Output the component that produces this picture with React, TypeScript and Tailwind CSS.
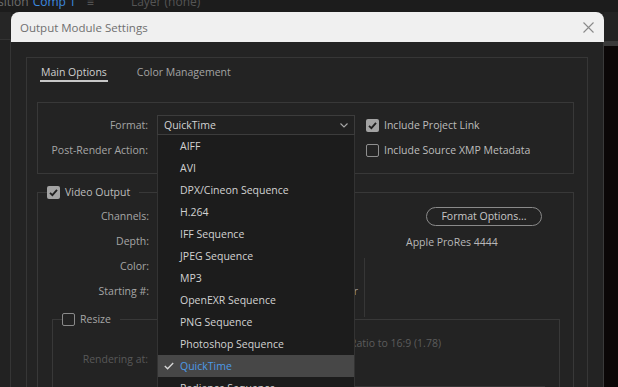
import React from "react";

const Check = ({ checked, dim }: { checked?: boolean; dim?: boolean }) =>
  checked ? (
    <span className="inline-flex h-[13px] w-[13px] shrink-0 items-center justify-center rounded-[2px] bg-[#a3a3a3]">
      <svg width="11" height="11" viewBox="0 0 11 11">
        <path d="M2 5.8 L4.4 8.2 L9 2.8" fill="none" stroke="#202020" strokeWidth="1.8" />
      </svg>
    </span>
  ) : (
    <span
      className={`inline-block h-[13px] w-[13px] shrink-0 rounded-[2px] border-[1.5px] ${
        dim ? "border-[#8a8a8a]" : "border-[#8f8f8f]"
      }`}
    />
  );

const items = [
  "AIFF",
  "AVI",
  "DPX/Cineon Sequence",
  "H.264",
  "IFF Sequence",
  "JPEG Sequence",
  "MP3",
  "OpenEXR Sequence",
  "PNG Sequence",
  "Photoshop Sequence",
  "QuickTime",
  "Radiance Sequence",
  "SGI Sequence",
];

export default function App() {
  return (
    <div className="relative h-[387px] w-[618px] overflow-hidden bg-[#1f1f1f] font-['Open_Sans',sans-serif] text-[10.5px] leading-[15px]">
      {/* top strip */}
      <div className="flex h-[12px] shrink-0 items-start overflow-hidden bg-[#1c1c1c] text-[12px] leading-[14px]">
        <div className="-ml-[2px] -mt-[5px] flex items-center whitespace-nowrap">
          <span className="text-[#6e6e6e]">sition</span>
          <span className="ml-[4px] text-[#3d8be0]">Comp 1</span>
          <span className="ml-[11px] text-[#5e5e5e]">≡</span>
          <span className="ml-[37px] text-[#555]">Layer (none)</span>
        </div>
      </div>

      <div className="flex h-[375px] overflow-hidden">
        {/* left gutter */}
        <div className="flex w-[11px] shrink-0 flex-col">
          <div className="h-[28px] shrink-0 border-b border-[#333] bg-[#262626]" />
          <div className="flex-1 border-r border-[#353535] bg-[#222]" />
        </div>

        {/* dialog */}
        <div className="flex w-[593px] shrink-0 flex-col overflow-hidden">
          <div className="flex h-[30px] shrink-0 items-center justify-between rounded-t-[8px] bg-[#f0f0f0] pl-[9px] pr-[10px]">
            <span className="text-[11.5px] text-[#6f6f6f]">Output Module Settings</span>
            <svg width="11" height="11" viewBox="0 0 11 11">
              <path d="M0.5 0.5 L10.5 10.5 M10.5 0.5 L0.5 10.5" stroke="#8a8a8a" strokeWidth="1.1" />
            </svg>
          </div>

          <div className="min-h-0 flex-1 border-r border-[#3a3a3a] bg-[#232323] px-[15px] pt-[15px]">
            <div className="h-[400px] border border-[#363636]">
              {/* tabs */}
              <div className="flex gap-[28px] pl-[13px] pt-[7px]">
                <div className="border-b-2 border-[#c8c8c8] px-[1px] text-[#cfcfcf]">Main Options</div>
                <div className="px-[1px] text-[#a3a3a3]">Color Management</div>
              </div>

              {/* format group */}
              <div className="ml-[10px] mr-[13px] mt-[20px] flex flex-col gap-[5px] border border-[#383838] pb-[13px] pt-[12px]">
                <div className="flex h-[20px] items-center">
                  <div className="w-[110px] text-right text-[#a6a6a6]">Format:</div>
                  <div className="relative ml-[9px] w-[198px]">
                    <div className="flex h-[20px] items-center justify-between border border-[#3c3c3c] bg-[#212121] pl-[6px] pr-[6px] text-[#d2d2d2]">
                      <span>QuickTime</span>
                      <svg width="8" height="5" viewBox="0 0 8 5">
                        <path d="M0.5 0.5 L4 4 L7.5 0.5" fill="none" stroke="#a8a8a8" strokeWidth="1.1" />
                      </svg>
                    </div>
                    {/* dropdown menu */}
                    <div className="absolute left-0 top-full z-10 w-[198px] border-x border-[#333] bg-[#1c1c1c]">
                      {items.map((it) => {
                        const sel = it === "QuickTime";
                        return (
                          <div
                            key={it}
                            className={`relative flex h-[22px] items-center pl-[22px] ${
                              sel ? "bg-[#474747] text-[#4d9ae6]" : "text-[#d2d2d2]"
                            }`}
                          >
                            {sel && (
                              <svg className="absolute left-[6px] top-[7px]" width="10" height="8" viewBox="0 0 10 8">
                                <path d="M0.8 4 L3.6 6.8 L9.2 1" fill="none" stroke="#d8d8d8" strokeWidth="1.3" />
                              </svg>
                            )}
                            {it}
                          </div>
                        );
                      })}
                    </div>
                  </div>
                  <div className="ml-[11px] flex items-center gap-[5px] text-[#bdbdbd]">
                    <Check checked />
                    <span>Include Project Link</span>
                  </div>
                </div>
                <div className="flex h-[20px] items-center">
                  <div className="w-[110px] text-right text-[#a6a6a6]">Post-Render Action:</div>
                  <div className="ml-[9px] w-[198px]" />
                  <div className="ml-[11px] flex items-center gap-[5px] text-[#bdbdbd]">
                    <Check />
                    <span>Include Source XMP Metadata</span>
                  </div>
                </div>
              </div>

              {/* video output */}
              <fieldset className="ml-[10px] mr-[13px] mt-[11px] border border-[#383838] pb-[20px]">
                <legend className="ml-[9px] pr-[9px]">
                  <span className="flex h-[15px] items-center gap-[5px] text-[#bdbdbd]">
                    <Check checked />
                    <span>Video Output</span>
                  </span>
                </legend>
                <div className="flex items-start">
                  <div className="flex w-[326px] flex-col gap-[5px] pt-[6px]">
                    {["Channels:", "Depth:", "Color:", "Starting #:"].map((l) => (
                      <div key={l} className="flex h-[20px] items-center">
                        <div className="w-[111px] text-right text-[#a6a6a6]">{l}</div>
                        {l === "Starting #:" && (
                          <div className="ml-[8px] w-[201px] text-right text-[#a0a0a0]">Use Comp Frame Number</div>
                        )}
                      </div>
                    ))}
                  </div>
                  <div className="flex flex-1 flex-col">
                    <div className="ml-[62px] mt-[7px] flex h-[19px] w-[116px] items-center justify-center rounded-full border border-[#8a8a8a] text-[#c8c8c8]">
                      Format Options...
                    </div>
                    <div className="ml-[42px] mt-[9px] text-[#b8b8b8]">Apple ProRes 4444</div>
                    <div className="mb-[-16px] mt-[8px] h-[59px] border-l border-[#363636]" />
                  </div>
                </div>

                {/* resize */}
                <fieldset className="ml-[14px] mr-[13px] mt-[11px] h-[120px] border border-[#383838]">
                  <legend className="ml-[9px] pr-[9px]">
                    <span className="flex h-[15px] items-center gap-[5px] text-[#a6a6a6]">
                      <Check dim />
                      <span>Resize</span>
                    </span>
                  </legend>
                  <div className="mt-[9px] w-[388px] text-right text-[#5c5c5c]">Lock Aspect Ratio to 16:9 (1.78)</div>
                  <div className="mt-[1px] w-[95px] text-right text-[#585858]">Rendering at:</div>
                  <div className="ml-[302px] mt-[19px] w-[190px] border-t border-[#363636]" />
                </fieldset>
              </fieldset>
            </div>
          </div>
        </div>

        {/* right gutter */}
        <div className="flex flex-1 flex-col">
          <div className="h-[29px] shrink-0 bg-[#232323]" />
          <div className="h-[5px] shrink-0 bg-[#3a3a3a]" />
          <div className="flex-1 bg-[#0b0707]" />
        </div>
      </div>
    </div>
  );
}
